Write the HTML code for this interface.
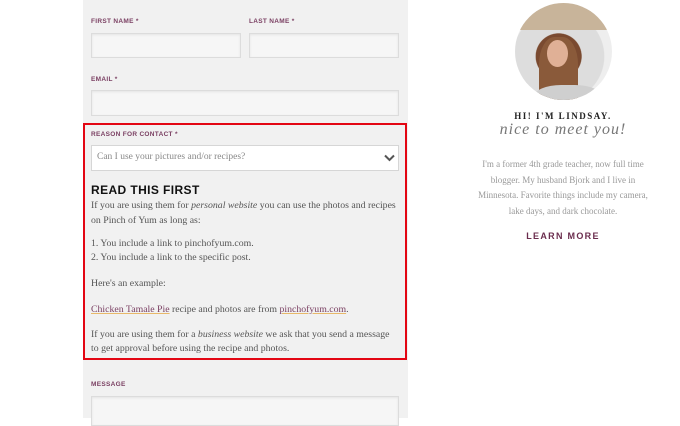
<!DOCTYPE html>
<html><head><style>
*{margin:0;padding:0;box-sizing:border-box}
body{width:680px;height:418px;background:#fff;position:relative;overflow:hidden;font-family:"Liberation Serif",serif}
.panel{position:absolute;left:83px;top:0;width:325px;height:418px;background:#f1f1f1}
.lbl{position:absolute;font:bold 6.5px "Liberation Sans",sans-serif;color:#7a3f62;letter-spacing:.3px}
.in{position:absolute;background:#f6f6f6;border:1px solid #dcdcdc;box-shadow:inset 0 1px 2px #e4e4e4}
.red{position:absolute;left:83px;top:123px;width:324px;height:237px;border:2px solid #e30613}
.t{position:absolute;left:91px;font-size:9.8px;color:#555;white-space:nowrap}
a{color:#7a3f62;text-decoration:underline;text-decoration-color:#e8b86a}
.r{position:absolute;left:440px;width:246px;text-align:center;white-space:nowrap}
</style></head><body>
<div class="panel"></div>
<div class="lbl" style="left:91px;top:18px">FIRST NAME *</div>
<div class="lbl" style="left:249px;top:18px">LAST NAME *</div>
<div class="in" style="left:91px;top:33px;width:150px;height:25px"></div>
<div class="in" style="left:249px;top:33px;width:150px;height:25px"></div>
<div class="lbl" style="left:91px;top:76px">EMAIL *</div>
<div class="in" style="left:91px;top:90px;width:308px;height:26px"></div>
<div class="red"></div>
<div class="lbl" style="left:91px;top:131px">REASON FOR CONTACT *</div>
<div style="position:absolute;left:91px;top:145px;width:308px;height:26px;background:#fff;border:1px solid #d6d6d6"></div>
<div class="t" style="left:97px;top:152px;color:#888;font-size:9.5px">Can I use your pictures and/or recipes?</div>
<svg style="position:absolute;left:384px;top:154px" width="11" height="8"><path d="M1 1.5L5.5 6L10 1.5" stroke="#555" stroke-width="2" fill="none"/></svg>
<div class="t" style="top:183px;font:bold 12px 'Liberation Sans',sans-serif;color:#111;letter-spacing:.4px">READ THIS FIRST</div>
<div class="t" style="top:200px">If you are using them for <i>personal website</i> you can use the photos and recipes</div>
<div class="t" style="top:215px">on Pinch of Yum as long as:</div>
<div class="t" style="top:238px">1. You include a link to pinchofyum.com.</div>
<div class="t" style="top:252px">2. You include a link to the specific post.</div>
<div class="t" style="top:278px">Here's an example:</div>
<div class="t" style="top:304px"><a>Chicken Tamale Pie</a> recipe and photos are from <a>pinchofyum.com</a>.</div>
<div class="t" style="top:329px">If you are using them for a <i>business website</i> we ask that you send a message</div>
<div class="t" style="top:343px">to get approval before using the recipe and photos.</div>
<div class="lbl" style="left:91px;top:381px">MESSAGE</div>
<div class="in" style="left:91px;top:396px;width:308px;height:30px"></div>
<div style="position:absolute;left:515px;top:3px;width:97px;height:97px;border-radius:50%;background:radial-gradient(circle at 45% 55%,#c99478 0 12%,#7a4a30 13% 30%,#ddd 31% 60%,#eee 61%);overflow:hidden"><div style="position:absolute;left:0;top:0;width:100%;height:28%;background:#c8b49a"></div><div style="position:absolute;left:25%;top:35%;width:40%;height:70%;background:#8a5a3a;border-radius:40% 40% 0 0"></div><div style="position:absolute;left:33%;top:38%;width:22%;height:28%;background:#e0b096;border-radius:50%"></div><div style="position:absolute;left:20%;top:85%;width:70%;height:30%;background:#cfcfcf;border-radius:40%"></div></div>
<div class="r" style="top:111px;left:440px;width:246px;font:bold 9px 'Liberation Serif',serif;letter-spacing:1.5px;color:#222">HI! I'M LINDSAY.</div>
<div class="r" style="top:121px;font:italic 16px 'Liberation Serif',serif;color:#777;letter-spacing:1px">nice to meet you!</div>
<div class="r" style="top:157px;font-size:9px;color:#999;line-height:15.5px">I'm a former 4th grade teacher, now full time<br>blogger. My husband Bjork and I live in<br>Minnesota. Favorite things include my camera,<br>lake days, and dark chocolate.</div>
<div class="r" style="top:231px;font:bold 9px 'Liberation Sans',sans-serif;color:#6b2d4e;letter-spacing:1.3px">LEARN MORE</div>
</body></html>
